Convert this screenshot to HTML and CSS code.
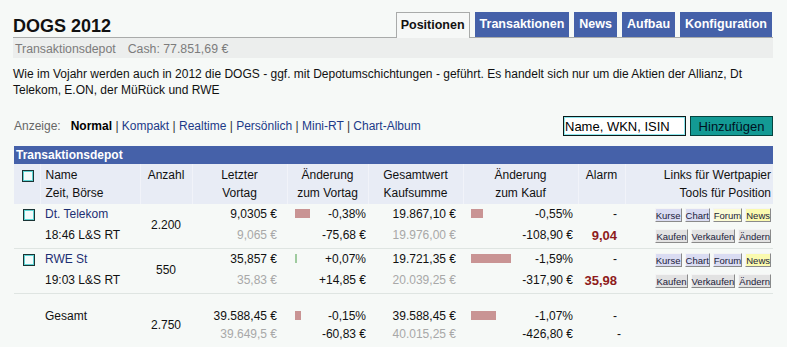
FILE: index.html
```html
<!DOCTYPE html>
<html lang="de">
<head>
<meta charset="utf-8">
<title>DOGS 2012</title>
<link rel="stylesheet" href="styles.css">
</head>
<body>
<div class="page">
  <header class="top">
    <h1 class="title">DOGS 2012</h1>
    <nav class="tabs">
      <a class="tab active">Positionen</a>
      <a class="tab">Transaktionen</a>
      <a class="tab">News</a>
      <a class="tab">Aufbau</a>
      <a class="tab">Konfiguration</a>
    </nav>
  </header>
  <div class="sub"><span class="sub-name">Transaktionsdepot</span><span>Cash: 77.851,69 €</span></div>
  <p class="desc">Wie im Vojahr werden auch in 2012 die DOGS - ggf. mit Depotumschichtungen - geführt. Es handelt sich nur um die Aktien der Allianz, Dt Telekom, E.ON, der MüRück und RWE</p>
  <div class="toolbar">
    <div class="views"><span class="views-label">Anzeige:</span><b class="views-current">Normal</b> | <a class="link">Kompakt</a> | <a class="link">Realtime</a> | <a class="link">Persönlich</a> | <a class="link">Mini-RT</a> | <a class="link">Chart-Album</a></div>
    <div class="add">
      <input class="search" type="text" value="Name, WKN, ISIN">
      <button class="btn-add" type="button">Hinzufügen</button>
    </div>
  </div>
  <section class="depot">
    <div class="depot-title">Transaktionsdepot</div>
    <table class="grid">
      <colgroup>
        <col class="w-cb"><col class="w-name"><col class="w-qty"><col class="w-price"><col class="w-chg1"><col class="w-total"><col class="w-chg2"><col class="w-alarm"><col class="w-links">
      </colgroup>
      <thead>
        <tr>
          <th class="c-cb"><div class="h"><span class="cb"></span></div></th>
          <th class="c-name"><div class="h">Name</div><div class="h">Zeit, Börse</div></th>
          <th class="c-center"><div class="h">Anzahl</div></th>
          <th class="c-center"><div class="h">Letzter</div><div class="h">Vortag</div></th>
          <th class="c-center"><div class="h">Änderung</div><div class="h">zum Vortag</div></th>
          <th class="c-center"><div class="h">Gesamtwert</div><div class="h">Kaufsumme</div></th>
          <th class="c-center"><div class="h">Änderung</div><div class="h">zum Kauf</div></th>
          <th class="c-center"><div class="h">Alarm</div></th>
          <th class="c-links"><div class="h">Links für Wertpapier</div><div class="h">Tools für Position</div></th>
        </tr>
      </thead>
      <tbody>
        <tr class="pos">
          <td class="c-cb"><div class="l"><span class="cb"></span></div></td>
          <td class="c-name"><div class="l"><a class="name-link">Dt. Telekom</a></div><div class="l">18:46 L&amp;S RT</div></td>
          <td class="c-qty">2.200</td>
          <td class="c-price"><div class="l">9,0305 €</div><div class="l muted">9,065 €</div></td>
          <td class="c-chg1"><div class="l bar-line"><span class="bar neg" style="width:15px"></span><span>-0,38%</span></div><div class="l">-75,68 €</div></td>
          <td class="c-total"><div class="l">19.867,10 €</div><div class="l muted">19.976,00 €</div></td>
          <td class="c-chg2"><div class="l bar-line"><span class="bar neg" style="width:12px"></span><span>-0,55%</span></div><div class="l">-108,90 €</div></td>
          <td class="c-alarm"><div class="l">-</div><div class="l alarm">9,04</div></td>
          <td class="c-links">
            <div class="l"><a class="mb mb-blue">Kurse</a><a class="mb mb-blue">Chart</a><a class="mb mb-pale">Forum</a><a class="mb mb-yellow">News</a></div>
            <div class="l"><a class="mb mb-gray">Kaufen</a><a class="mb mb-gray">Verkaufen</a><a class="mb mb-gray">Ändern</a></div>
          </td>
        </tr>
        <tr class="pos">
          <td class="c-cb"><div class="l"><span class="cb"></span></div></td>
          <td class="c-name"><div class="l"><a class="name-link">RWE St</a></div><div class="l">19:03 L&amp;S RT</div></td>
          <td class="c-qty">550</td>
          <td class="c-price"><div class="l">35,857 €</div><div class="l muted">35,83 €</div></td>
          <td class="c-chg1"><div class="l bar-line"><span class="bar pos-bar" style="width:2px"></span><span>+0,07%</span></div><div class="l">+14,85 €</div></td>
          <td class="c-total"><div class="l">19.721,35 €</div><div class="l muted">20.039,25 €</div></td>
          <td class="c-chg2"><div class="l bar-line"><span class="bar neg" style="width:40px"></span><span>-1,59%</span></div><div class="l">-317,90 €</div></td>
          <td class="c-alarm"><div class="l">-</div><div class="l alarm">35,98</div></td>
          <td class="c-links">
            <div class="l"><a class="mb mb-blue">Kurse</a><a class="mb mb-blue">Chart</a><a class="mb mb-blue">Forum</a><a class="mb mb-yellow">News</a></div>
            <div class="l"><a class="mb mb-gray">Kaufen</a><a class="mb mb-gray">Verkaufen</a><a class="mb mb-gray">Ändern</a></div>
          </td>
        </tr>
        <tr class="total">
          <td class="c-cb"></td>
          <td class="c-name"><div class="l">Gesamt</div><div class="l"></div></td>
          <td class="c-qty">2.750</td>
          <td class="c-price"><div class="l">39.588,45 €</div><div class="l muted">39.649,5 €</div></td>
          <td class="c-chg1"><div class="l bar-line"><span class="bar neg" style="width:6px"></span><span>-0,15%</span></div><div class="l">-60,83 €</div></td>
          <td class="c-total"><div class="l">39.588,45 €</div><div class="l muted">40.015,25 €</div></td>
          <td class="c-chg2"><div class="l bar-line"><span class="bar neg" style="width:25px"></span><span>-1,07%</span></div><div class="l">-426,80 €</div></td>
          <td class="c-alarm"><div class="l">-</div><div class="l dash-low">-</div></td>
          <td class="c-links"></td>
        </tr>
      </tbody>
    </table>
  </section>
</div>
</body>
</html>
```
FILE: styles.css
```css
body {
  margin: 0;
  background: #f6f9f7;
  font-family: "Liberation Sans", Arial, sans-serif;
  font-size: 12px;
  color: #111;
}

.page {
  width: 760px;
  padding-left: 13px;
}

/* header with tabs */
.top {
  display: flex;
  justify-content: space-between;
  align-items: flex-end;
  height: 38px;
  box-sizing: border-box;
  border-bottom: 1px solid #a9abaa;
}

.title {
  margin: 0;
  font-size: 18px;
  line-height: 22px;
  font-weight: bold;
  color: #111;
}

.tabs {
  display: flex;
  gap: 5px;
  margin-right: 1px;
}

.tab {
  height: 25px;
  line-height: 25px;
  padding: 0 5px;
  background: #4561a9;
  color: #fff;
  font-weight: bold;
  font-size: 12.5px;
  box-sizing: border-box;
  cursor: pointer;
}

.tab.active {
  height: 26px;
  margin-bottom: -1px;
  padding: 0 4px;
  background: #f6f8f7;
  color: #111;
  border: 1px solid #a9abaa;
  border-bottom: none;
}

.sub {
  height: 20px;
  line-height: 22px;
  background: #eceeed;
  color: #7c7c7c;
  padding-left: 2px;
  font-size: 12.3px;
}

.sub-name {
  margin-right: 12px;
}

.desc {
  margin: 8px 0 0;
  width: 772px;
  line-height: 16px;
}

/* view switch + add form */
.toolbar {
  display: flex;
  justify-content: space-between;
  align-items: center;
  margin-top: 18px;
  height: 20px;
}

.views {
  padding-left: 1px;
  color: #333;
}

.views-label {
  color: #666;
  margin-right: 10px;
}

.views-current {
  color: #000;
}

.link {
  color: #1c3a88;
  cursor: pointer;
}

.add {
  display: flex;
  gap: 4px;
}

.search {
  width: 123px;
  height: 20px;
  box-sizing: border-box;
  margin: 0;
  padding: 0 1px;
  border: 1px solid #0c1a1a;
  box-shadow: inset 0 0 0 1px #8ee8ee;
  background: #fff;
  color: #000;
  font-family: "Liberation Sans", Arial, sans-serif;
  font-size: 13px;
}

.btn-add {
  width: 83px;
  height: 20px;
  margin: 0;
  padding: 0;
  box-sizing: border-box;
  background: #139a94;
  border: 1px solid #05443f;
  color: #012;
  font-family: "Liberation Sans", Arial, sans-serif;
  font-size: 13px;
}

/* depot table */
.depot {
  margin-top: 10px;
  margin-left: 1px;
  width: 759px;
}

.depot-title {
  height: 18px;
  line-height: 18px;
  background: #4561a9;
  color: #fff;
  font-weight: bold;
  font-size: 12px;
  padding-left: 2px;
}

.grid {
  width: 759px;
  border-collapse: collapse;
  table-layout: fixed;
}

.w-cb { width: 26px; }
.w-name { width: 100px; }
.w-qty { width: 52px; }
.w-price { width: 95px; }
.w-chg1 { width: 81px; }
.w-total { width: 95px; }
.w-chg2 { width: 115px; }
.w-alarm { width: 47px; }
.w-links { width: 148px; }

.grid th {
  background: #e8ecf5;
  font-weight: normal;
  padding: 2px 0;
  vertical-align: top;
  border-left: 1px solid #f1f3f9;
  white-space: nowrap;
}

.grid th:first-child {
  border-left: none;
}

.h {
  height: 18px;
  line-height: 18px;
}

.grid td {
  padding: 0;
  vertical-align: top;
  white-space: nowrap;
}

.pos td {
  padding-bottom: 2px;
  border-bottom: 1px solid #dfe5e2;
}

.total td {
  padding-top: 13px;
}

.l {
  height: 21px;
  line-height: 21px;
}

.total .l {
  height: 18px;
  line-height: 18px;
}

.c-cb {
  text-align: center;
  padding-left: 3px !important;
}

.cb {
  display: inline-block;
  width: 12px;
  height: 12px;
  box-sizing: border-box;
  border: 1px solid #1a3434;
  box-shadow: inset 0 0 0 1px #5fd3d3;
  background: #f3fbfb;
  vertical-align: middle;
}

.c-name {
  text-align: left;
  padding-left: 5px !important;
}

.name-link {
  color: #1d2f73;
  cursor: pointer;
}

.c-center {
  text-align: center;
}

.c-qty {
  text-align: center;
  vertical-align: middle !important;
}

.c-price {
  text-align: right;
  padding-right: 10px !important;
}

.c-chg1 {
  text-align: right;
  padding-left: 8px !important;
  padding-right: 2px !important;
}

.c-total {
  text-align: right;
  padding-right: 7px !important;
}

.c-chg2 {
  text-align: right;
  padding-left: 8px !important;
  padding-right: 5px !important;
}

.c-alarm {
  text-align: right;
  padding-right: 8px !important;
}

.c-links {
  text-align: right;
  padding-right: 2px !important;
}

.grid th.c-links {
  padding-right: 1px;
}

.bar-line {
  display: flex;
  align-items: center;
  justify-content: space-between;
}

.bar {
  display: block;
  height: 9px;
  margin-top: -2px;
}

.bar.neg {
  background: #c99494;
}

.bar.pos-bar {
  background: #9fcb9f;
}

.muted {
  color: #a8a8a8;
}

.alarm {
  color: #8e1b1b;
  font-weight: bold;
  font-size: 13px;
}

.dash-low {
  margin-right: -4px;
}

.mb {
  display: inline-block;
  height: 14px;
  line-height: 13px;
  box-sizing: border-box;
  padding: 0;
  margin-left: 3px;
  font-size: 9.5px;
  color: #1b1b3a;
  border-top: 1px solid #f4f4f4;
  border-left: 1px solid #f4f4f4;
  border-right: 1px solid #8a8a8a;
  border-bottom: 1px solid #8a8a8a;
  vertical-align: middle;
  cursor: pointer;
}

.mb-blue { background: #dadcf2; }
.mb-pale { background: #fbfbd4; }
.mb-yellow { background: #fafaaf; }
.mb-gray { background: #e2e2e2; }
```
